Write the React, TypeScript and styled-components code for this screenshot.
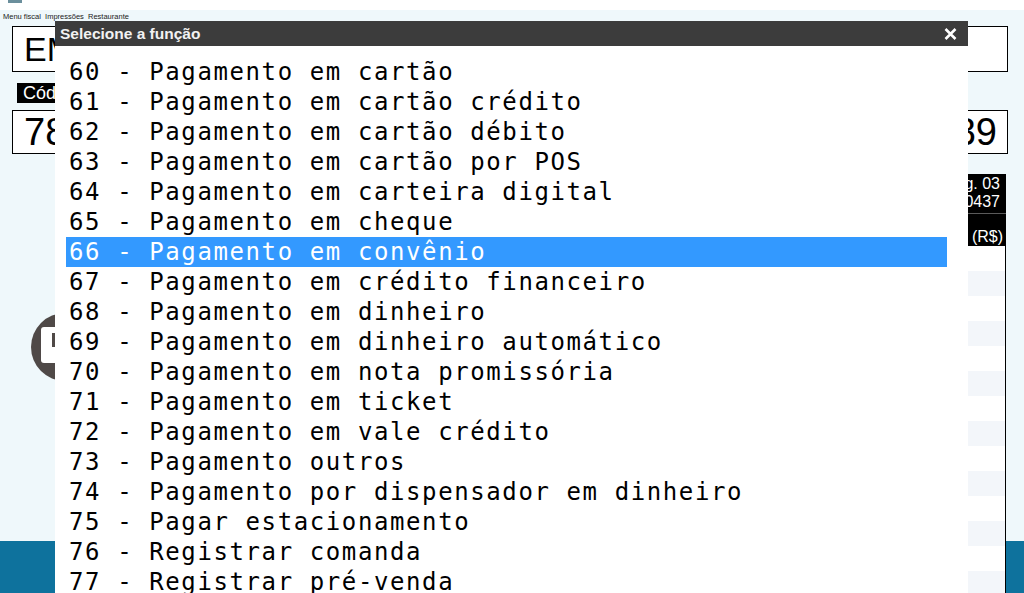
import React from 'react';
import styled, { createGlobalStyle } from 'styled-components';

const GlobalStyle = createGlobalStyle`
    html, body {
        margin: 0;
        padding: 0;
    }
    body {
        width: 1024px;
        height: 593px;
        overflow: hidden;
        background: #fff;
        font-family: "Liberation Sans", Arial, sans-serif;
    }
`;

const Screen = styled.div`
    position: relative;
    width: 1024px;
    height: 593px;
    display: flex;
    flex-direction: column;
    overflow: hidden;
`;

const TopStrip = styled.div`
    flex-shrink: 0;
    height: 10px;
    padding-left: 8px;
    background: #fff;
`;

const AppMark = styled.div`
    width: 14px;
    height: 3px;
    background: #6b8f9c;
`;

const Workspace = styled.div`
    flex: 1;
    min-height: 0;
    display: flex;
    flex-direction: column;
    padding: 0 16px 0 12px;
    background: #eff8fb;
`;

const MenuLine = styled.div`
    height: 12px;
    margin-left: -9px;
    line-height: 13px;
    font-size: 7.5px;
    color: #222;
    white-space: nowrap;
`;

const FieldBox = styled.div<{ $height: number; $size: number; $top: number }>`
    box-sizing: border-box;
    height: ${(p) => p.$height}px;
    margin-top: ${(p) => p.$top}px;
    padding: 0 10px 0 11px;
    display: flex;
    align-items: center;
    justify-content: space-between;
    border: 1px solid #000;
    background: #fff;
    color: #000;
    font-size: ${(p) => p.$size}px;
    white-space: nowrap;
`;

const CodeLabel = styled.div`
    align-self: flex-start;
    height: 20px;
    margin: 11px 0 0 5px;
    padding: 0 8px 0 6px;
    background: #000;
    color: #fff;
    font-size: 18px;
    line-height: 21px;
`;

const Content = styled.div`
    flex: 1;
    min-height: 0;
    display: flex;
`;

const LeftArea = styled.div`
    flex: 1;
    padding: 158px 0 0 18px;
`;

const SidePanel = styled.div`
    position: relative;
    z-index: 1;
    width: 240px;
    margin: 20px 2px -52px 0;
    display: flex;
    flex-direction: column;
`;

const InfoBlock = styled.div`
    height: 78px;
    padding-top: 1px;
    box-sizing: border-box;
    background: #000;
    color: #fff;
    font-size: 16px;
`;

const InfoLine = styled.div<{ $pad: number }>`
    height: 18px;
    line-height: 18px;
    padding-right: ${(p) => p.$pad}px;
    text-align: right;
    white-space: nowrap;
`;

const InfoRule = styled.div`
    height: 1px;
    margin: 2px 0 14px;
    background: #5a5a5a;
`;

const Accent = styled.span`
    color: #f39a2b;
`;

const ItemTable = styled.div`
    flex: 1;
    background: #fff;
    border-right: 1px solid #000;
`;

const ItemRow = styled.div`
    height: 25px;
    &:nth-child(even) {
        background: #f3f6fa;
    }
`;

const Footer = styled.div`
    flex-shrink: 0;
    height: 52px;
    background: #0e729d;
`;

const Modal = styled.div`
    position: absolute;
    z-index: 10;
    left: 55px;
    top: 21px;
    width: 913px;
    height: 600px;
    display: flex;
    flex-direction: column;
    background: #fff;
`;

const TitleBar = styled.div`
    flex-shrink: 0;
    height: 25px;
    padding: 0 11px 0 5px;
    display: flex;
    align-items: center;
    justify-content: space-between;
    background: #3c3c3c;
    color: #f2f2f2;
    font-size: 15.5px;
    font-weight: bold;
`;

const CloseButton = styled.button`
    width: 14px;
    height: 14px;
    padding: 0;
    border: 0;
    background: none;
    display: flex;
    align-items: center;
    justify-content: center;
    cursor: pointer;
`;

const OptionList = styled.ul`
    list-style: none;
    margin: 0;
    padding: 11px 21px 0 11px;
`;

const Option = styled.li<{ $selected?: boolean }>`
    height: 30px;
    padding-left: 3px;
    line-height: 30px;
    font-family: "DejaVu Sans Mono", "Liberation Mono", monospace;
    font-size: 24px;
    letter-spacing: 1.6px;
    white-space: pre;
    background: ${(p) => (p.$selected ? '#3399ff' : 'transparent')};
    color: ${(p) => (p.$selected ? '#fff' : '#000')};
`;

const options = [
    '60 - Pagamento em cartão',
    '61 - Pagamento em cartão crédito',
    '62 - Pagamento em cartão débito',
    '63 - Pagamento em cartão por POS',
    '64 - Pagamento em carteira digital',
    '65 - Pagamento em cheque',
    '66 - Pagamento em convênio',
    '67 - Pagamento em crédito financeiro',
    '68 - Pagamento em dinheiro',
    '69 - Pagamento em dinheiro automático',
    '70 - Pagamento em nota promissória',
    '71 - Pagamento em ticket',
    '72 - Pagamento em vale crédito',
    '73 - Pagamento outros',
    '74 - Pagamento por dispensador em dinheiro',
    '75 - Pagar estacionamento',
    '76 - Registrar comanda',
    '77 - Registrar pré-venda',
];

const DeviceBadge = () => (
    <svg width="70" height="70" viewBox="0 0 70 70">
        <circle cx="35" cy="35" r="34" fill="#4f4947" />
        <rect x="11" y="15" width="30" height="36" rx="3" fill="#fff" />
        <rect x="22" y="21" width="10" height="14" fill="#4f4947" />
    </svg>
);

export default function App() {
    return (
        <>
            <GlobalStyle />
            <Screen>
                <TopStrip>
                    <AppMark />
                </TopStrip>
                <Workspace>
                    <MenuLine>Menu fiscal &nbsp;Impressões &nbsp;Restaurante</MenuLine>
                    <FieldBox $height={46} $size={34} $top={4}>
                        <span>EM ABERTO</span>
                    </FieldBox>
                    <CodeLabel>Código do produto</CodeLabel>
                    <FieldBox $height={44} $size={38} $top={7}>
                        <span>7891000100103</span>
                        <span>1 x 0,00 = 0,39</span>
                    </FieldBox>
                    <Content>
                        <LeftArea>
                            <DeviceBadge />
                        </LeftArea>
                        <SidePanel>
                            <InfoBlock>
                                <InfoLine $pad={6}>Caixa 001 - Pág. 03</InfoLine>
                                <InfoLine $pad={6}>Cupom 000437</InfoLine>
                                <InfoRule />
                                <InfoLine $pad={3}>
                                    <Accent>Falta</Accent> (R$)
                                </InfoLine>
                            </InfoBlock>
                            <ItemTable>
                                {Array.from({ length: 14 }).map((_, i) => (
                                    <ItemRow key={i} />
                                ))}
                            </ItemTable>
                        </SidePanel>
                    </Content>
                </Workspace>
                <Footer />

                <Modal>
                    <TitleBar>
                        <span>Selecione a função</span>
                        <CloseButton aria-label="Fechar">
                            <svg width="13" height="12" viewBox="0 0 13 12">
                                <path d="M1.5 1 L11.5 11 M11.5 1 L1.5 11" stroke="#fff" strokeWidth="2.6" />
                            </svg>
                        </CloseButton>
                    </TitleBar>
                    <OptionList>
                        {options.map((o) => (
                            <Option key={o} $selected={o.startsWith('66')}>
                                {o}
                            </Option>
                        ))}
                    </OptionList>
                </Modal>
            </Screen>
        </>
    );
}
